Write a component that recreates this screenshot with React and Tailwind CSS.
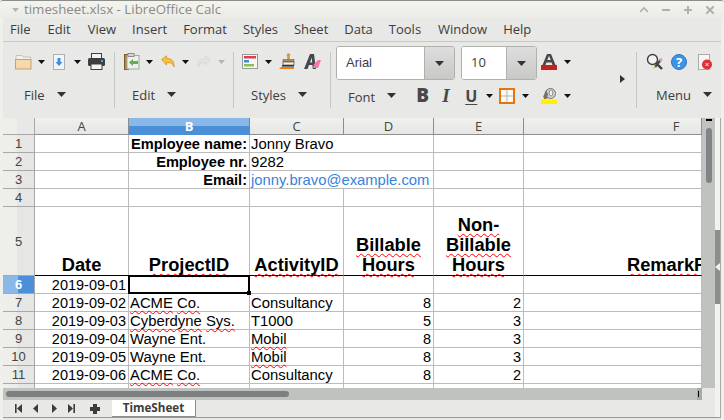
import React from "react";

const Caret = ({ big, faded, className = "" }) => (
  <svg width={big ? 9 : 7} height={big ? 5 : 4} viewBox={big ? "0 0 9 5" : "0 0 7 4"} className={`shrink-0 ${className}`}>
    <polygon points={big ? "0,0 9,0 4.5,5" : "0,0 7,0 3.5,4"} fill={faded ? "#b4b4b2" : big ? "#333" : "#111"} />
  </svg>
);

const Folder = () => (
  <svg width="17" height="17" viewBox="0 0 17 17" className="shrink-0">
    <path d="M1 2.5h6l1 1.5h7.5v3H1z" fill="#f4f1ea" stroke="#c9c3b6" />
    <rect x="0.5" y="6.5" width="15.5" height="9.5" fill="#f5d8ac" stroke="#c5a173" />
  </svg>
);
const Save = () => (
  <svg width="12" height="16" viewBox="0 0 12 16" className="shrink-0">
    <rect x="0.5" y="0.5" width="11" height="15" fill="#f2f4f6" stroke="#a9b0b6" />
    <path d="M4.5 4h3v4h2L6 12 2.5 8h2z" fill="#3a8ee0" />
  </svg>
);
const Printer = () => (
  <svg width="17" height="17" viewBox="0 0 17 17" className="shrink-0">
    <rect x="3.5" y="0.5" width="10" height="5" fill="#f4f4f4" stroke="#3c4043" />
    <rect x="0" y="5" width="17" height="8" rx="1.5" fill="#3c4043" />
    <rect x="3" y="11" width="11" height="5.5" fill="#f4f4f4" stroke="#3c4043" />
    <rect x="13" y="7" width="2" height="2" fill="#22b8e8" />
  </svg>
);
const Paste = () => (
  <svg width="16" height="17" viewBox="0 0 16 17" className="shrink-0">
    <rect x="0.5" y="1.5" width="4" height="15" fill="#b9853f" stroke="#7d5a2a" />
    <rect x="3" y="2.5" width="12" height="13.5" fill="#eef0ee" stroke="#a5a8a5" />
    <rect x="4" y="0.5" width="6" height="3" fill="#d7d7d4" stroke="#8d8d8a" />
    <path d="M5 9.5l4-3.5v2h5v3H9v2z" fill="#5fb04a" />
  </svg>
);
const Arrow = ({ flip, color, edge }) => (
  <svg width="14" height="13" viewBox="0 0 14 13" className="shrink-0" style={flip ? { transform: "scaleX(-1)" } : undefined}>
    <path d="M0.7 4.5L5.5 0.7v2.6c4.5 0 8 2.6 7.5 8.7-1-3.5-3.4-4.6-7.5-4.5v2.6z" fill={color} stroke={edge} strokeWidth="0.8" />
  </svg>
);
const StyleList = () => (
  <svg width="16" height="15" viewBox="0 0 16 15" className="shrink-0">
    <rect x="0.5" y="0.5" width="15" height="14" fill="#f6f6f6" stroke="#9a9a9a" />
    <rect x="2" y="2" width="12" height="2.5" fill="#d8444a" />
    <rect x="2" y="6" width="5" height="2.5" fill="#3a8ed8" />
    <rect x="2" y="10" width="10" height="2.5" fill="#8cc04c" />
  </svg>
);
const Stamp = () => (
  <svg width="16" height="17" viewBox="0 0 16 17" className="shrink-0">
    <circle cx="9.5" cy="2" r="1.8" fill="#c99a5b" />
    <rect x="8.2" y="3" width="2.6" height="4" fill="#c99a5b" />
    <rect x="4" y="6.5" width="11" height="2.5" fill="#b98a4e" stroke="#7d5a2a" strokeWidth="0.5" />
    <rect x="4" y="9" width="11" height="3" fill="#f0f0f0" stroke="#333" strokeWidth="0.6" />
    <path d="M2 14h13v2H0z" fill="#ee7d18" />
    <rect x="3" y="12" width="12" height="1.6" fill="#333" />
  </svg>
);
const ClearFmt = () => (
  <svg width="17" height="15" viewBox="0 0 17 15" className="shrink-0">
    <path d="M0 15L6 0h4l2 15H8.8L8.4 11H5l-1.4 4zM6 8.5h2.2L7.8 3.5z" fill="#45484a" />
    <path d="M10 10l4-4h3l-3 8h-5z" fill="#f07ab0" />
  </svg>
);
const FontColor = () => (
  <svg width="16" height="16" viewBox="0 0 16 16" className="shrink-0">
    <path d="M1.5 11L6 0h4l4.5 11h-3L10.6 8.5H5.4L4.5 11zM6.3 6h3.4L8 1.8z" fill="#45484a" />
    <rect x="0" y="11" width="16" height="5" fill="#c8201e" />
  </svg>
);
const Borders = () => (
  <svg width="16" height="16" viewBox="0 0 16 16" className="shrink-0">
    <rect x="1" y="1" width="14" height="14" fill="#fafafa" stroke="#e8740e" strokeWidth="2" />
    <path d="M8 2v12M2 8h12" stroke="#b5b5b0" strokeWidth="1" />
  </svg>
);
const Highlight = () => (
  <svg width="16" height="16" viewBox="0 0 16 16" className="shrink-0">
    <ellipse cx="9.5" cy="5.5" rx="5" ry="5" fill="#d0d0ce" stroke="#77736e" />
    <ellipse cx="10" cy="5" rx="1.8" ry="3" fill="#f2f2f0" stroke="#77736e" strokeWidth="0.7" />
    <path d="M5 2L2 9l4 2 1-5z" fill="#77736e" />
    <circle cx="4" cy="10" r="1.2" fill="#b0622a" />
    <rect x="0" y="11.5" width="16" height="4.5" fill="#fff200" />
  </svg>
);
const FindIcon = () => (
  <svg width="17" height="17" viewBox="0 0 17 17" className="shrink-0">
    <circle cx="6.5" cy="6.5" r="5" fill="#f4f4f4" stroke="#3c4043" strokeWidth="1.4" />
    <path d="M10 10l6 6" stroke="#3c4043" strokeWidth="2.4" />
    <path d="M9 14l6-7.5" stroke="#45484a" strokeWidth="2.4" />
    <path d="M14 8l2-2.5" stroke="#e89ac8" strokeWidth="2.4" />
    <path d="M7.5 15.5l1.5-2" stroke="#d8d070" strokeWidth="1.5" />
  </svg>
);
const HelpIcon = () => (
  <div className="w-4 h-4 rounded-full bg-[#3d94e4] border border-[#2a78c4] text-white text-[13px] leading-[14px] text-center font-bold shrink-0">?</div>
);
const CloseDoc = () => (
  <svg width="15" height="16" viewBox="0 0 15 16" className="shrink-0">
    <rect x="0.5" y="0.5" width="11" height="15" fill="#f6f6f6" stroke="#aaa" />
    <circle cx="9" cy="10.5" r="5" fill="#e03038" />
    <path d="M7.5 9l3 3M10.5 9l-3 3" stroke="#fff" strokeWidth="0.9" />
  </svg>
);

const Group = ({ width, children, label, labelPl, labelGap, last }) => (
  <div className={`flex flex-col shrink-0 h-[56px] mt-[10px] ${last ? "" : "border-r border-[#c6c6c2]"}`} style={{ width }}>
    <div className="flex items-center h-[21px] -mt-[1px]">{children}</div>
    <div className="flex items-center h-[21px] mt-[13px]" style={{ paddingLeft: labelPl, columnGap: labelGap }}>
      <span className="text-[13px] leading-none text-[#3c3c3c]">{label}</span>
      <Caret big className="-mt-[3px]" />
    </div>
  </div>
);

const Combo = ({ value, inputW, btnW }) => (
  <div className="flex h-[34px] border border-[#b0b0ac] rounded-[3px] overflow-hidden shrink-0 bg-white">
    <div className="flex items-center bg-white text-[13px] text-[#3c3c3c] pl-[9px]" style={{ width: inputW }}>{value}</div>
    <div className="flex items-center justify-center border-l border-[#b0b0ac] bg-gradient-to-b from-[#dedede] to-[#c8c8c6]" style={{ width: btnW }}>
      <Caret big />
    </div>
  </div>
);

const Wavy = ({ children }) => (
  <span className="underline decoration-wavy decoration-[#ff0000] decoration-1 underline-offset-[2px] [text-decoration-skip-ink:none]">{children}</span>
);

const colNames = ["A", "B", "C", "D", "E", "F"];
const line = "border-r border-b border-[#bcbcbc]";
const cell = `${line} whitespace-nowrap flex items-center leading-none pt-[1px]`;
const textCell = `${cell} text-[14.85px] text-black pl-[1px]`;
const numCell = `${cell} text-[14.5px] text-black justify-end pr-[2px]`;

const Row = ({ n, selected }) => (
  <div
    className={`flex items-center justify-center border-r border-b border-[#a8a8a8] text-[13px] leading-none ${
      selected
        ? "bg-gradient-to-r from-[#8ab8e8] from-50% to-[#4a8fd8] to-50% text-white font-bold"
        : "bg-gradient-to-r from-[#eeeeea] from-45% to-[#e6e6e4] to-45% text-[#444]"
    }`}
  >
    {n}
  </div>
);

const data = [
  [7, "2019-09-02", <span><Wavy>ACME</Wavy> <Wavy>Co.</Wavy></span>, "Consultancy", 8, 2],
  [8, "2019-09-03", <span><Wavy>Cyberdyne</Wavy> <Wavy>Sys.</Wavy></span>, "T1000", 5, 3],
  [9, "2019-09-04", "Wayne Ent.", <Wavy>Mobil</Wavy>, 8, 3],
  [10, "2019-09-05", "Wayne Ent.", <Wavy>Mobil</Wavy>, 8, 3],
  [11, "2019-09-06", <span><Wavy>ACME</Wavy> <Wavy>Co.</Wavy></span>, "Consultancy", 8, 2],
];

const Label = ({ children }) => <div className={`${cell} text-[14.6px] text-black justify-end pr-[2px] font-bold`}>{children}</div>;
const Blank = () => <div className={line} />;
const Head = ({ children, className = "" }) => (
  <div className={`border-r border-b border-r-[#bcbcbc] border-b-black flex flex-col justify-end items-center whitespace-nowrap text-[18.3px] leading-[20px] font-bold text-black ${className}`}>
    {children}
  </div>
);

const Nav = ({ children }) => <svg width="8" height="9" viewBox="0 0 8 9" className="shrink-0">{children}</svg>;

export default function App() {
  const menus = [
    ["File", "mr-[1px]"], ["Edit", "mr-[1px]"], ["View", ""], ["Insert", ""], ["Format", ""], ["Styles", ""],
    ["Sheet", ""], ["Data", ""], ["Tools", "mr-[1px]"], ["Window", ""], ["Help", ""],
  ];
  return (
    <div className="w-[724px] h-[420px] overflow-hidden flex flex-col bg-[#e8e8e6] border-t border-[#8c8c88] rounded-t-[3px] font-['Open_Sans','Noto_Sans',sans-serif]">
      {/* title bar */}
      <div className="h-[17px] shrink-0 flex items-center bg-gradient-to-b from-[#f4f4ef] to-[#ecece6] pl-[12px] pr-[10px] text-[#8a8a8a]">
        <Caret faded />
        <span className="ml-[5px] text-[13.3px] leading-none whitespace-nowrap">timesheet.xlsx - LibreOffice Calc</span>
        <div className="ml-auto flex items-center gap-[14px]">
          <svg width="8" height="8" viewBox="0 0 8 8"><path d="M0 6l4-4 4 4" fill="none" stroke="#b0b0ac" strokeWidth="1.6" /></svg>
          <svg width="8" height="8" viewBox="0 0 8 8"><path d="M0 4h8" stroke="#b0b0ac" strokeWidth="2" /></svg>
          <svg width="8" height="8" viewBox="0 0 8 8"><path d="M0 4h8M4 0v8" stroke="#b0b0ac" strokeWidth="2" /></svg>
          <svg width="8" height="8" viewBox="0 0 8 8"><path d="M0 0l8 8M8 0l-8 8" stroke="#b0b0ac" strokeWidth="2" /></svg>
        </div>
      </div>

      <div className="flex-1 flex flex-col min-h-0 border-l-[3px] border-r-[3px] border-[#f0f0ea]">
        {/* menu */}
        <div className="h-[24px] shrink-0 flex items-center gap-[16px] pl-[7px] text-[13px] leading-none text-[#3c3c3c] border-b border-[#c8c8c4]">
          {menus.map(([m, c]) => (
            <span key={m} className={c}>{m}</span>
          ))}
        </div>

        {/* toolbar */}
        <div className="h-[76px] shrink-0 flex">
          <Group width={112} label="File" labelPl={21} labelGap={12}>
            <div className="ml-[12px]"><Folder /></div>
            <Caret className="ml-[6px]" />
            <div className="ml-[8px]"><Save /></div>
            <Caret className="ml-[9px]" />
            <div className="ml-[7px]"><Printer /></div>
          </Group>
          <Group width={119} label="Edit" labelPl={17} labelGap={12}>
            <div className="ml-[9px]"><Paste /></div>
            <Caret className="ml-[6px]" />
            <div className="ml-[8px]"><Arrow color="#f7c23c" edge="#d8902a" /></div>
            <Caret className="ml-[7px]" />
            <div className="ml-[8px]"><Arrow flip color="#e2e2e0" edge="#d6d6d4" /></div>
            <Caret faded className="ml-[7px]" />
          </Group>
          <Group width={97} label="Styles" labelPl={17} labelGap={12}>
            <div className="ml-[8px]"><StyleList /></div>
            <Caret className="ml-[7px]" />
            <div className="ml-[7px]"><Stamp /></div>
            <div className="ml-[9px]"><ClearFmt /></div>
          </Group>
          <div className="flex flex-col shrink-0 w-[306px] h-[56px] mt-[10px] border-r border-[#c6c6c2] relative">
            <div className="flex items-center h-[34px] -mt-[6px] pl-[5px]">
              <Combo value={<span className="font-['Liberation_Sans']">Arial</span>} inputW={87} btnW={30} />
              <div className="ml-[6px]"><Combo value="10" inputW={44} btnW={30} /></div>
              <div className="ml-[4px] -mt-[2px]"><FontColor /></div>
              <Caret className="ml-[7px] -mt-[2px]" />
            </div>
            <div className="flex items-center h-[21px] mt-[5px] pl-[17px]">
              <span className="text-[13px] leading-none text-[#3c3c3c] mt-[3px]">Font</span>
              <Caret big className="ml-[12px]" />
              <span className="ml-[20px] w-[12px] text-[19px] leading-none font-extrabold text-[#484848]">B</span>
              <span className="ml-[14px] w-[12px] text-[19px] leading-none font-extrabold italic text-[#484848] font-['Liberation_Serif']">I</span>
              <span className="ml-[11px] w-[12px] text-[16px] leading-none font-bold underline underline-offset-2 text-[#484848]">U</span>
              <Caret className="ml-[9px]" />
              <div className="ml-[6px]"><Borders /></div>
              <Caret className="ml-[7px]" />
              <div className="ml-[12px]"><Highlight /></div>
              <Caret className="ml-[7px]" />
            </div>
            <svg width="5" height="8" viewBox="0 0 5 8" className="absolute left-[289px] top-[23px]"><polygon points="0,0 5,4 0,8" fill="#333" /></svg>
          </div>
          <Group width={80} label="Menu" labelPl={19} labelGap={12} last>
            <div className="ml-[9px]"><FindIcon /></div>
            <div className="ml-[8px]"><HelpIcon /></div>
            <div className="ml-[11px]"><CloseDoc /></div>
          </Group>
        </div>

        {/* sheet + sidebar */}
        <div className="flex-1 min-h-0 flex border-b border-[#9a9a96] mb-[2px]">
          <div className="w-[712px] flex flex-col min-w-0">
            <div className="h-[270px] flex">
              <div className="w-[699px] h-[270px] overflow-hidden bg-white font-['Liberation_Sans']">
                <div className="grid grid-cols-[32px_94px_121px_94px_90px_90px_178px] grid-rows-[17px_18px_18px_18px_18px_69px_18px_18px_18px_18px_18px_18px_18px] w-[699px]">
                  {/* column heads */}
                  <div className="bg-gradient-to-r from-[#eeeeea] from-45% to-[#e8e8e6] to-45% border-r border-b border-[#a8a8a8]" />
                  {colNames.map((c) => (
                    <div
                      key={c}
                      className={`flex items-center justify-center text-[13px] leading-none border-r border-b font-['Open_Sans'] ${
                        c === "B"
                          ? "bg-gradient-to-b from-[#8ab8e8] from-50% to-[#4a8fd8] to-50% text-white font-bold border-[#4a8fd8]"
                          : "bg-gradient-to-b from-[#f0f0ee] to-[#e6e6e4] text-[#444] border-[#8e8e8e]"
                      } ${c === "F" ? "pl-[127px]" : ""}`}
                    >
                      {c}
                    </div>
                  ))}

                  <Row n={1} /><Blank /><Label>Employee name:</Label>
                  <div className={`${textCell} col-span-2`}>Jonny Bravo</div><Blank /><Blank />

                  <Row n={2} /><Blank /><Label>Employee nr.</Label>
                  <div className={`${textCell} col-span-2`}>9282</div><Blank /><Blank />

                  <Row n={3} /><Blank /><Label>Email:</Label>
                  <div className={`${cell} text-[14.8px] text-[#3484dc] pl-[1px] col-span-2`}>jonny.bravo@example.com</div><Blank /><Blank />

                  <Row n={4} /><Blank /><Blank /><Blank /><Blank /><Blank /><Blank />

                  <Row n={5} />
                  <Head>Date</Head>
                  <Head><Wavy>ProjectID</Wavy></Head>
                  <Head><Wavy>ActivityID</Wavy></Head>
                  <Head><Wavy>Billable</Wavy><Wavy>Hours</Wavy></Head>
                  <Head><Wavy>Non-</Wavy><Wavy>Billable</Wavy><Wavy>Hours</Wavy></Head>
                  <Head className="items-start! pl-[103px] overflow-hidden"><Wavy>RemarkP</Wavy></Head>

                  <Row n={6} selected />
                  <div className={numCell}>2019-09-01</div>
                  <div className={`${line} relative`}>
                    <div className="absolute -left-[1px] -top-[1px] w-[122px] h-[19px] border-2 border-black" />
                    <div className="absolute -right-[2px] -bottom-[2px] w-[4px] h-[4px] bg-black" />
                  </div>
                  <Blank /><Blank /><Blank /><Blank />

                  {data.map(([n, d, p, a, b, nb]) => (
                    <React.Fragment key={n}>
                      <Row n={n} />
                      <div className={numCell}>{d}</div>
                      <div className={textCell}>{p}</div>
                      <div className={textCell}>{a}</div>
                      <div className={numCell}>{b}</div>
                      <div className={numCell}>{nb}</div>
                      <Blank />
                    </React.Fragment>
                  ))}

                  <Row n={12} />
                  <div className={numCell}>2019-09-07</div>
                  <Blank /><Blank /><Blank /><Blank /><Blank />
                </div>
              </div>
              {/* vertical scrollbar */}
              <div className="w-[13px] h-[270px] bg-[#c0c2c0] flex flex-col items-center pt-[1px]">
                <div className="w-[6px] h-[2px] bg-black" />
                <div className="w-[6px] h-[55px] mt-[7px] rounded-[3px] bg-[#808484]" />
              </div>
            </div>
            {/* horizontal scrollbar */}
            <div className="h-[12px] shrink-0 flex">
              <div className="w-[699px] bg-[#c0c2c0] flex items-center pl-[3px]">
                <div className="w-[283px] h-[6px] rounded-[3px] bg-[#7b7f7f]" />
                <div className="ml-auto w-[5px] h-[12px] bg-[#a8aaa8] flex items-center pl-[1px]">
                  <div className="w-[1px] h-[6px] bg-black" />
                </div>
              </div>
            </div>
            {/* tabs */}
            <div className="flex-1 flex items-start pl-[11px]">
              <div className="h-[17px] flex items-center gap-[10px] text-[#333]">
                <Nav><path d="M1 0h1.6v9H1zM8 0v9L3 4.5z" fill="#3c3c3c" /></Nav>
                <Nav><path d="M6 0v9L1 4.5z" fill="#3c3c3c" /></Nav>
                <Nav><path d="M2 0v9l5-4.5z" fill="#3c3c3c" /></Nav>
                <Nav><path d="M0 0v9l5-4.5zM5.4 0H7v9H5.4z" fill="#3c3c3c" /></Nav>
                <svg width="10" height="10" viewBox="0 0 10 10" className="ml-[4px]"><path d="M3 0h4v3h3v4H7v3H3V7H0V3h3z" fill="#3c3c3c" /></svg>
              </div>
              <div className="ml-[12px] w-[84px] h-[17px] bg-white border-r border-b border-[#8e8e8a] flex items-center justify-center text-[11.7px] leading-none font-bold text-[#3c3c3c]">
                TimeSheet
              </div>
            </div>
          </div>
          {/* sidebar */}
          <div className="w-[6px] bg-[#f2f2ee] border-r border-[#a8a8a4] flex flex-col">
            <div className="mt-[112px] h-[74px] bg-[#8c8e8c] flex items-center justify-center">
              <svg width="5" height="8" viewBox="0 0 5 8"><polygon points="5,0 0,4 5,8" fill="#f0f0f0" /></svg>
            </div>
          </div>
        </div>
      </div>
    </div>
  );
}
